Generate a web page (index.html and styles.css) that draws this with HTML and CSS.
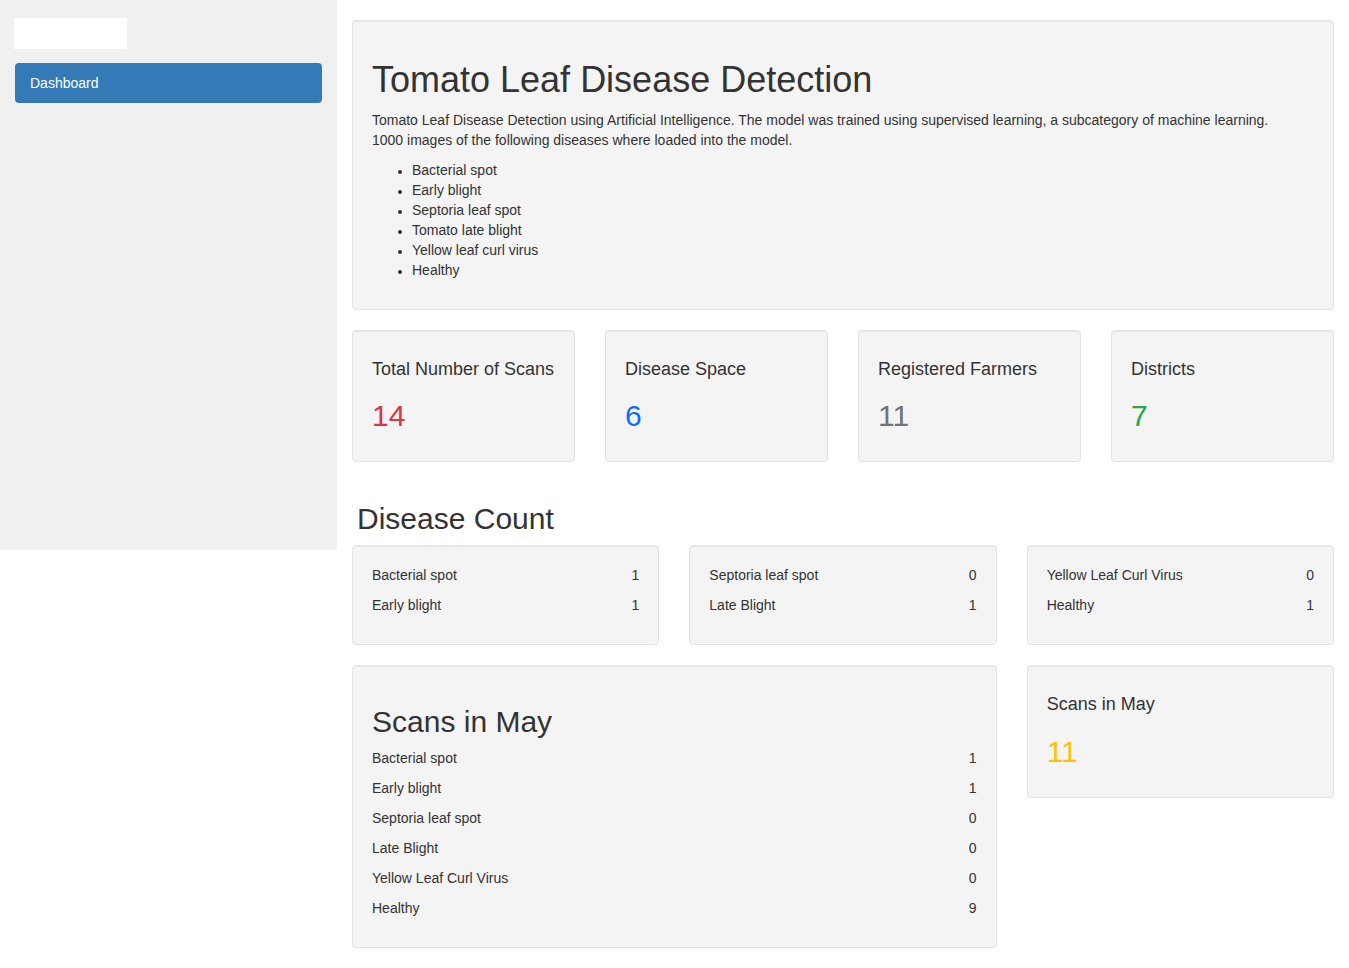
FILE: index.html
```html
<!DOCTYPE html>
<html lang="en">
<head>
<meta charset="utf-8">
<title>Tomato Leaf Disease Detection</title>
<link rel="stylesheet" href="styles.css">
</head>
<body>
<div class="layout">
  <aside class="sidebar">
    <div class="logo"></div>
    <nav class="nav">
      <a class="nav-link active" href="#">Dashboard</a>
    </nav>
  </aside>
  <main class="main">
    <section class="well intro">
      <h1>Tomato Leaf Disease Detection</h1>
      <p>Tomato Leaf Disease Detection using Artificial Intelligence. The model was trained using supervised learning, a subcategory of machine learning. 1000 images of the following diseases where loaded into the model.</p>
      <ul>
        <li>Bacterial spot</li>
        <li>Early blight</li>
        <li>Septoria leaf spot</li>
        <li>Tomato late blight</li>
        <li>Yellow leaf curl virus</li>
        <li>Healthy</li>
      </ul>
    </section>

    <section class="stats">
      <div class="well stat">
        <h4>Total Number of Scans</h4>
        <h3 class="num red">14</h3>
      </div>
      <div class="well stat">
        <h4>Disease Space</h4>
        <h3 class="num blue">6</h3>
      </div>
      <div class="well stat">
        <h4>Registered Farmers</h4>
        <h3 class="num gray">11</h3>
      </div>
      <div class="well stat">
        <h4>Districts</h4>
        <h3 class="num green">7</h3>
      </div>
    </section>

    <h2 class="section-title">Disease Count</h2>
    <section class="grid3">
      <div class="well list">
        <div class="row"><span>Bacterial spot</span><span>1</span></div>
        <div class="row"><span>Early blight</span><span>1</span></div>
      </div>
      <div class="well list">
        <div class="row"><span>Septoria leaf spot</span><span>0</span></div>
        <div class="row"><span>Late Blight</span><span>1</span></div>
      </div>
      <div class="well list">
        <div class="row"><span>Yellow Leaf Curl Virus</span><span>0</span></div>
        <div class="row"><span>Healthy</span><span>1</span></div>
      </div>
    </section>

    <section class="grid3 bottom">
      <div class="well list span2">
        <h2 class="card-title">Scans in May</h2>
        <div class="row"><span>Bacterial spot</span><span>1</span></div>
        <div class="row"><span>Early blight</span><span>1</span></div>
        <div class="row"><span>Septoria leaf spot</span><span>0</span></div>
        <div class="row"><span>Late Blight</span><span>0</span></div>
        <div class="row"><span>Yellow Leaf Curl Virus</span><span>0</span></div>
        <div class="row"><span>Healthy</span><span>9</span></div>
      </div>
      <div class="well stat">
        <h4>Scans in May</h4>
        <h3 class="num yellow">11</h3>
      </div>
    </section>
  </main>
</div>
</body>
</html>
```

FILE: styles.css
```css
* { box-sizing: border-box; }

html, body {
  margin: 0;
  padding: 0;
  background: #fff;
}

body {
  font-family: "Liberation Sans", Arial, Helvetica, sans-serif;
  font-size: 14px;
  line-height: 20px;
  color: #333;
}

.layout {
  display: flex;
  align-items: flex-start;
}

.sidebar {
  width: 337px;
  flex: 0 0 337px;
  height: 550px;
  background: #f0f0f0;
  padding: 18px 15px 0 15px;
}

.logo {
  width: 113px;
  height: 31px;
  background: #fff;
  margin-left: -1px;
}

.nav {
  margin-top: 14px;
}

.nav-link {
  display: block;
  padding: 10px 15px;
  border-radius: 4px;
  color: #fff;
  text-decoration: none;
  line-height: 20px;
}

.nav-link.active {
  background: #337ab7;
}

.main {
  flex: 1;
  padding: 20px 15px 0 15px;
}

.well {
  background: #f4f4f4;
  border: 1px solid #e3e3e3;
  border-radius: 4px;
  padding: 19px;
  box-shadow: inset 0 1px 1px rgba(0, 0, 0, 0.05);
}

.intro h1 {
  font-size: 36px;
  font-weight: 500;
  line-height: 1.1;
  margin: 20px 0 10px 0;
}

.intro p {
  margin: 0 0 10px 0;
  max-width: 920px;
}

.intro ul {
  margin: 0 0 10px 0;
  padding-left: 40px;
}

.intro li::marker {
  font-size: 12px;
}

.stats {
  display: grid;
  grid-template-columns: repeat(4, 1fr);
  column-gap: 30px;
  margin-top: 20px;
}

.stat h4 {
  font-size: 18px;
  font-weight: 500;
  line-height: 1.1;
  margin: 10px 0 0 0;
}

.stat .num {
  font-size: 30px;
  font-weight: 500;
  line-height: 1.1;
  margin: 20px 0 10px 0;
}

.red { color: #dc3545; }
.blue { color: #0d6efd; }
.gray { color: #6c757d; }
.green { color: #28a745; }
.yellow { color: #ffc107; }

.section-title {
  font-size: 30px;
  font-weight: 500;
  line-height: 1.1;
  margin: 40px 0 10px 0;
  padding-left: 5px;
}

.grid3 {
  display: grid;
  grid-template-columns: repeat(3, 1fr);
  column-gap: 30px;
  align-items: start;
}

.grid3.bottom {
  margin-top: 20px;
}

.span2 {
  grid-column: span 2;
}

.list .row {
  display: flex;
  justify-content: space-between;
  line-height: 20px;
  margin-bottom: 10px;
}

.card-title {
  font-size: 30px;
  font-weight: 500;
  line-height: 1.1;
  margin: 20px 0 10px 0;
}
```
